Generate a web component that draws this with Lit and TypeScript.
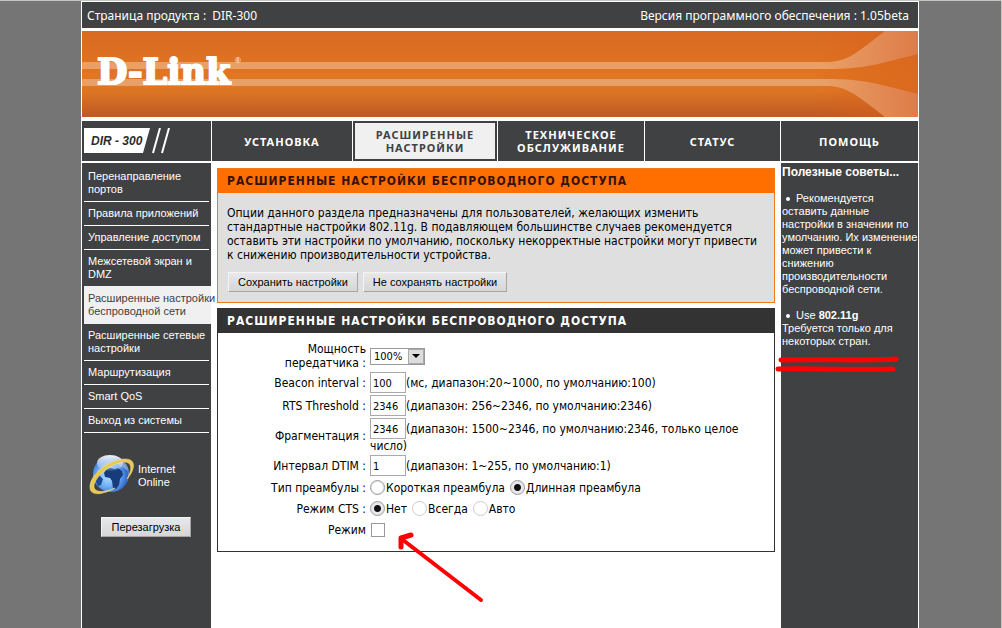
import { LitElement, html, css, svg, nothing } from "lit";
import { customElement } from "lit/decorators.js";
import { classMap } from "lit/directives/class-map.js";

interface Tab {
  lines: string[];
  active?: boolean;
}

const TABS: Tab[] = [
  { lines: ["УСТАНОВКА"] },
  { lines: ["РАСШИРЕННЫЕ", "НАСТРОЙКИ"], active: true },
  { lines: ["ТЕХНИЧЕСКОЕ", "ОБСЛУЖИВАНИЕ"] },
  { lines: ["СТАТУС"] },
  { lines: ["ПОМОЩЬ"] },
];

const MENU: Tab[] = [
  { lines: ["Перенаправление", "портов"] },
  { lines: ["Правила приложений"] },
  { lines: ["Управление доступом"] },
  { lines: ["Межсетевой экран и", "DMZ"] },
  { lines: ["Расширенные настройки", "беспроводной сети"], active: true },
  { lines: ["Расширенные сетевые", "настройки"] },
  { lines: ["Маршрутизация"] },
  { lines: ["Smart QoS"] },
  { lines: ["Выход из системы"] },
];

const broken = (lines: string[]) =>
  lines.map((line, i) => html`${i ? html`<br />` : nothing}${line}`);

@customElement("router-banner")
export class RouterBanner extends LitElement {
  static styles = css`
    :host {
      display: block;
      height: 86px;
    }
    svg {
      display: block;
      width: 100%;
      height: 100%;
    }
    .name {
      font: bold 35px "DejaVu Serif", serif;
      fill: #fff;
      stroke: #fff;
      stroke-width: 2px;
      stroke-linejoin: round;
    }
    .mark {
      font: 8px "Liberation Sans", sans-serif;
      fill: #fff;
    }
  `;

  render() {
    return html`<svg viewBox="0 0 836 86" preserveAspectRatio="xMinYMid slice" role="img" aria-label="D-Link">
      ${svg`
        <defs>
          <linearGradient id="base" x1="0" y1="0" x2="0" y2="1">
            <stop offset="0" stop-color="#d96a23" />
            <stop offset="0.5" stop-color="#e17522" />
            <stop offset="0.7" stop-color="#dd7623" />
            <stop offset="1" stop-color="#be5826" />
          </linearGradient>
          <linearGradient id="end" x1="0" y1="0" x2="1" y2="0">
            <stop offset="0" stop-color="#d95f18" stop-opacity="0" />
            <stop offset="1" stop-color="#d9641c" stop-opacity="0.7" />
          </linearGradient>
          <linearGradient id="ray" gradientUnits="userSpaceOnUse" x1="740" y1="0" x2="836" y2="0">
            <stop offset="0" stop-color="#e9a066" />
            <stop offset="1" stop-color="#de7c48" />
          </linearGradient>
        </defs>
        <rect width="836" height="86" fill="url(#base)" />
        <rect x="730" width="106" height="86" fill="url(#end)" />
        <path d="M0 31H745C764 31 775 21 785 14L803 0H836V23L796 33C778 37 764 38 745 38H0Z" fill="url(#ray)" />
        <path d="M0 48H745C764 48 778 49 796 53L836 63V86H803L785 72C775 65 764 55 745 55H0Z" fill="url(#ray)" />
        <text class="name" x="15" y="53">D-Link</text>
        <text class="mark" x="153" y="32">®</text>
      `}
    </svg>`;
  }
}

@customElement("app-root")
export class AppRoot extends LitElement {
  static styles = css`
    :host {
      display: block;
      box-sizing: border-box;
      min-height: 100vh;
      padding-right: 1px;
      border-top: 1px solid #c4c4c0;
      border-right: 1px solid #c4c4c0;
      background: #757575;
      font: 12px/14px "DejaVu Sans Condensed", "Noto Sans", sans-serif;
      color: #000;
    }
    * {
      box-sizing: border-box;
    }
    .page {
      position: relative;
      display: flex;
      flex-direction: column;
      max-width: 838px;
      min-height: calc(100vh - 1px);
      margin: 0 auto;
      padding: 1px 1px 0;
      background: #fff;
    }
    .top {
      display: flex;
      justify-content: space-between;
      align-items: center;
      height: 26px;
      margin-bottom: 3px;
      padding: 2px 9px 0 5px;
      background: #404143;
      color: #fff;
      font-family: "Noto Sans", sans-serif;
    }
    .top span + span {
      padding-left: 3px;
    }
    .tabs {
      display: grid;
      grid-template-columns: 129px 140fr 144fr 146fr 135fr 137px;
      gap: 1px;
      margin: 4px 0 2px;
    }
    .model,
    .tab {
      display: flex;
      align-items: center;
      height: 40px;
      background: #404143;
    }
    .model svg {
      margin-left: 2px;
    }
    .model text {
      font: italic bold 12px "Liberation Sans", sans-serif;
      fill: #2c2c2c;
    }
    .tab {
      justify-content: center;
      border: 2px solid #404143;
      color: #fff;
      font: bold 11px/13px "Noto Sans", sans-serif;
      letter-spacing: 1px;
      text-align: center;
      text-decoration: none;
    }
    .tab.active {
      background: #f0f0f0;
      color: #404143;
    }
    .body {
      display: grid;
      grid-template-columns: 129px minmax(0, 1fr) 137px;
      flex: 1;
    }
    .side,
    .tips {
      background: #404143;
      color: #fff;
      font: 11px/13px "Liberation Sans", sans-serif;
    }
    .menu {
      margin: 0;
      padding: 2px 0 0 2px;
      list-style: none;
    }
    .menu li {
      margin-right: 2px;
      padding: 5px 0 5px 4px;
      border-bottom: 1px solid #fff;
      white-space: nowrap;
    }
    .menu a {
      color: inherit;
      text-decoration: none;
    }
    .menu li.active {
      margin: -1px 0 0;
      padding-top: 6px;
      border-color: #f0f0f0;
      background: #f0f0f0;
      color: #404143;
    }
    .status {
      display: flex;
      align-items: center;
      gap: 4px;
      padding: 22px 0 20px 7px;
    }
    .btn {
      height: 20px;
      padding: 0 9px;
      border: 1px solid;
      border-color: #f4f4f4 #a8a4a0 #a8a4a0 #f4f4f4;
      background: linear-gradient(#e8e8ea, #d6d6d8);
      color: #000;
      font: 11px/13px "Liberation Sans", sans-serif;
      white-space: nowrap;
    }
    .side .btn {
      display: block;
      width: 90px;
      margin: 0 0 0 19px;
      padding: 0;
    }
    main {
      padding: 5px 6px;
    }
    .panel {
      margin-bottom: 5px;
      border: 1px solid #333;
    }
    .panel h2 {
      margin: 0;
      padding: 0 9px;
      background: #333;
      color: #fff;
      font: bold 12px/24px "DejaVu Sans Condensed", sans-serif;
      letter-spacing: 1px;
    }
    .intro {
      border-color: #ee7a1c;
      background: #dfdfdf;
    }
    .intro h2 {
      background: #ff6f00;
      color: #38120a;
    }
    .intro p {
      margin: 0;
      padding: 13px 9px 10px;
    }
    .actions {
      display: flex;
      gap: 5px;
      padding: 0 10px 10px;
    }
    .form {
      display: grid;
      grid-template-columns: 148px minmax(0, 1fr);
      align-items: center;
      gap: 2px 4px;
      padding: 9px 0 12px;
    }
    .caption {
      text-align: right;
    }
    .field {
      min-height: 19px;
    }
    .line {
      display: flex;
      align-items: center;
    }
    .text {
      width: 36px;
      height: 21px;
      margin: 0;
      padding: 2px 2px 0;
      border: 1px solid #aaa;
      background: #fff;
      color: #000;
      font: 11px/13px "DejaVu Sans Condensed", sans-serif;
    }
    .power {
      width: 55px;
      height: 17px;
      margin: 0;
      padding: 0 3px;
      border: 1px solid #999;
      border-radius: 0;
      appearance: none;
      background: #fff;
      color: #000;
      font: 11px/13px "DejaVu Sans Condensed", sans-serif;
    }
    .pick {
      position: relative;
      display: inline-flex;
    }
    .pick svg {
      position: absolute;
      top: 1px;
      right: 1px;
      pointer-events: none;
    }
    .choice {
      display: inline-flex;
      align-items: center;
      gap: 1px;
      margin-right: 5px;
    }
    .radio,
    .tick {
      width: 15px;
      height: 15px;
      margin: 0;
      appearance: none;
      border: 1px solid #999;
      background: #fff;
    }
    .radio {
      border-radius: 50%;
      box-shadow: inset 0 0 0 1px #e4e4e4;
    }
    .radio:checked {
      background: radial-gradient(circle, #111 0 3px, #e9e9ee 4px);
    }
    .radio:disabled {
      border-color: #ccc;
      box-shadow: none;
    }
    .tick {
      width: 14px;
      height: 14px;
      margin-left: 1px;
    }
    .tips {
      padding: 3px 0 0 1px;
    }
    .tips h3 {
      margin: 0 0 13px;
      font: bold 12px/13px "Liberation Sans", sans-serif;
    }
    .tips ul {
      margin: 0;
      padding: 0;
      list-style: none;
      white-space: nowrap;
    }
    .tips li {
      margin-bottom: 13px;
    }
    .tips li::before {
      content: "";
      display: inline-block;
      width: 4px;
      height: 4px;
      margin: 0 6px 1px 4px;
      border-radius: 50%;
      background: #fff;
    }
    .note {
      position: absolute;
      pointer-events: none;
      fill: none;
      stroke: #f00;
      stroke-linecap: round;
    }
    .underline {
      top: 353px;
      right: 18px;
    }
    .arrow {
      top: 529px;
      left: 315px;
    }
  `;

  private row(id: string, caption: string, value: string, hint: string, rest = "") {
    return html`
      <label class="caption" for=${id}>${caption}</label>
      <div class="field">
        <div class="line"><input class="text" id=${id} .value=${value} /><span>${hint}</span></div>
        ${rest ? html`<div>${rest}</div>` : nothing}
      </div>
    `;
  }

  private radio(name: string, label: string, checked = false, disabled = false) {
    return html`<label class="choice"
      ><input class="radio" type="radio" name=${name} .checked=${checked} ?disabled=${disabled} />${label}</label
    >`;
  }

  private globe() {
    return html`<svg width="45" height="42" viewBox="0 0 45 42" aria-hidden="true">
      ${svg`
        <defs>
          <radialGradient id="sea" cx="0.42" cy="0.55" r="0.6">
            <stop offset="0" stop-color="#b8e2ff" />
            <stop offset="0.55" stop-color="#68a8f2" />
            <stop offset="0.9" stop-color="#2f66cc" />
            <stop offset="1" stop-color="#8fb4ea" />
          </radialGradient>
          <linearGradient id="shine" x1="0" y1="0" x2="0" y2="1">
            <stop offset="0" stop-color="#fff" stop-opacity="0.95" />
            <stop offset="1" stop-color="#fff" stop-opacity="0.1" />
          </linearGradient>
        </defs>
        <circle cx="22" cy="19" r="18" fill="url(#sea)" />
        <path d="M17 15l4-2 5 1 3-1 4 3 1 4-3 4-1 6-3 4-3-1-1-7-2-3-5-1-1-4z" fill="#163c7c" />
        <path d="M6 19l2-2 3 4 3 3-2 6-3 1-3-6z" fill="#1c4a94" />
        <path d="M31 4l6 6 2 6-4-3-4-1-3-4z" fill="#7fa4d8" />
        <ellipse cx="21" cy="8" rx="13" ry="8" fill="url(#shine)" />
        <path d="M38 24C46 15 48 4 36 4 21 4 2 18 1 31 0 42 14 40 26 33 14 38 4 38 5 30 8 19 23 8 35 7 44 7 43 15 38 24Z" fill="#e8c850" stroke="#f6e690" stroke-width="0.5" />
      `}
    </svg>`;
  }

  render() {
    return html`
      <div class="page">
        <header class="top">
          <div><span>Страница продукта :</span> <span>DIR-300</span></div>
          <div>Версия программного обеспечения : 1.05beta</div>
        </header>
        <router-banner></router-banner>
        <nav class="tabs">
          <div class="model">
            <svg width="90" height="26" viewBox="0 0 90 26" role="img" aria-label="DIR-300">
              <path d="M0 0H66L59 25H0Z" fill="#fff" />
              <path d="M76 0L69 25M85 0L78 25" stroke="#fff" stroke-width="2" />
              <text x="7" y="17">DIR - 300</text>
            </svg>
          </div>
          ${TABS.map(
            (t) => html`<a href="#" class=${classMap({ tab: true, active: !!t.active })}>
              <span>${broken(t.lines)}</span>
            </a>`
          )}
        </nav>
        <div class="body">
          <aside class="side">
            <ul class="menu">
              ${MENU.map(
                (m) => html`<li class=${classMap({ active: !!m.active })}><a href="#">${broken(m.lines)}</a></li>`
              )}
            </ul>
            <div class="status">${this.globe()}<span>Internet<br />Online</span></div>
            <button class="btn">Перезагрузка</button>
          </aside>
          <main>
            <section class="panel intro">
              <h2>РАСШИРЕННЫЕ НАСТРОЙКИ БЕСПРОВОДНОГО ДОСТУПА</h2>
              <p>
                Опции данного раздела предназначены для пользователей, желающих изменить<br />
                стандартные настройки 802.11g. В подавляющем большинстве случаев рекомендуется<br />
                оставить эти настройки по умолчанию, поскольку некорректные настройки могут привести<br />
                к снижению производительности устройства.
              </p>
              <div class="actions">
                <button class="btn">Сохранить настройки</button>
                <button class="btn">Не сохранять настройки</button>
              </div>
            </section>
            <section class="panel">
              <h2>РАСШИРЕННЫЕ НАСТРОЙКИ БЕСПРОВОДНОГО ДОСТУПА</h2>
              <form class="form">
                <label class="caption" for="power">Мощность<br />передатчика :</label>
                <div class="line">
                  <span class="pick">
                    <select class="power" id="power">
                      <option>100%</option>
                      <option>50%</option>
                      <option>25%</option>
                    </select>
                    <svg width="16" height="15" viewBox="0 0 16 15" aria-hidden="true">
                      <rect x="0.5" y="0.5" width="15" height="14" fill="#dcdcdc" stroke="#aaa" />
                      <path d="M4 5H12L8 9Z" fill="#000" />
                    </svg>
                  </span>
                </div>
                ${this.row("beacon", "Beacon interval :", "100", "(мс, диапазон:20~1000, по умолчанию:100)")}
                ${this.row("rts", "RTS Threshold :", "2346", "(диапазон: 256~2346, по умолчанию:2346)")}
                ${this.row("frag", "Фрагментация :", "2346", "(диапазон: 1500~2346, по умолчанию:2346, только целое", "число)")}
                ${this.row("dtim", "Интервал DTIM :", "1", "(диапазон: 1~255, по умолчанию:1)")}
                <span class="caption" id="preamble">Тип преамбулы :</span>
                <div class="field line" role="radiogroup" aria-labelledby="preamble">
                  ${this.radio("preamble", "Короткая преамбула")} ${this.radio("preamble", "Длинная преамбула", true)}
                </div>
                <span class="caption" id="cts">Режим CTS :</span>
                <div class="field line" role="radiogroup" aria-labelledby="cts">
                  ${this.radio("cts", "Нет", true)} ${this.radio("cts", "Всегда", false, true)}
                  ${this.radio("cts", "Авто", false, true)}
                </div>
                <label class="caption" for="mode">Режим</label>
                <div class="field line"><input class="tick" type="checkbox" id="mode" /></div>
              </form>
            </section>
          </main>
          <aside class="tips">
            <h3>Полезные советы...</h3>
            <ul>
              <li>Рекомендуется<br />оставить данные<br />настройки в значении по<br />умолчанию. Их изменение<br />может
                привести к<br />снижению<br />производительности<br />беспроводной сети.</li>
              <li>Use <b>802.11g</b><br />Требуется только для<br />некоторых стран.</li>
            </ul>
          </aside>
        </div>
        <svg class="note underline" width="126" height="20" viewBox="0 0 126 20" aria-hidden="true">
          <path d="M6 6C40 5 90 7 121 5" stroke-width="5" />
          <path d="M3 15C30 14 60 16 118 15" stroke-width="5" />
        </svg>
        <svg class="note arrow" width="90" height="76" viewBox="0 0 90 76" aria-hidden="true">
          <path d="M85 70L7 10" stroke-width="4" />
          <path d="M5 17V8L15 5" stroke-width="5" stroke-linejoin="round" />
        </svg>
      </div>
    `;
  }
}
